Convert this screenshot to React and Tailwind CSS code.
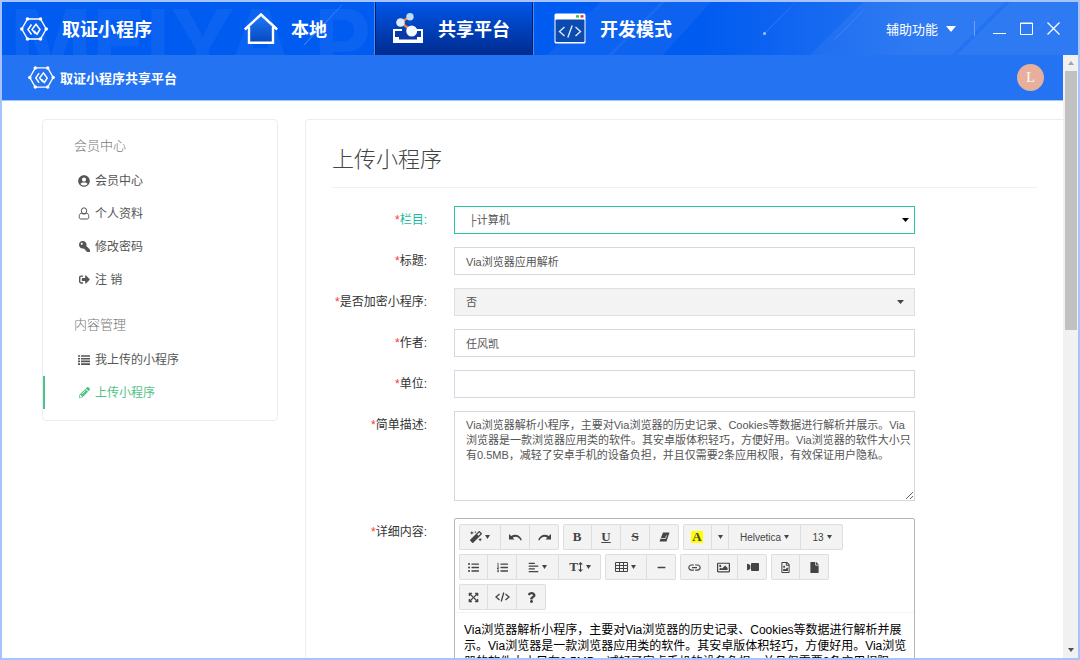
import {
  FaUserCircle, FaKey, FaSignOutAlt, FaPencilAlt, FaMagic, FaListUl, FaListOl,
  FaAlignLeft, FaMinus, FaRegImage, FaVideo, FaRegFileImage, FaFile,
  FaExpandArrowsAlt, FaQuestion,
} from 'react-icons/fa'
import { MdInsertLink } from 'react-icons/md'
import clsx from 'clsx'

const BRIEF =
  'Via浏览器解析小程序，主要对Via浏览器的历史记录、Cookies等数据进行解析并展示。Via浏览器是一款浏览器应用类的软件。其安卓版体积轻巧，方便好用。Via浏览器的软件大小只有0.5MB，减轻了安卓手机的设备负担，并且仅需要2条应用权限，有效保证用户隐私。'

const accountLinks = [
  { label: '会员中心', icon: <FaUserCircle /> },
  { label: '个人资料', icon: <PersonIcon /> },
  { label: '修改密码', icon: <FaKey className="size-[11px] -scale-x-100" /> },
  { label: '注 销', icon: <FaSignOutAlt className="size-[11px]" /> },
]

const contentLinks = [
  { label: '我上传的小程序', icon: <ListIcon /> },
  { label: '上传小程序', icon: <FaPencilAlt className="size-[11px]" />, active: true },
]

// each inner array is one button group of the editor toolbar
const toolbar = [
  [
    { name: '样式', icon: <FaMagic className="size-3" />, caret: true },
    { name: '撤销', icon: <UndoIcon /> },
    { name: '重做', icon: <UndoIcon className="-scale-x-100" /> },
  ],
  [
    { name: '粗体', icon: <Glyph>B</Glyph> },
    { name: '下划线', icon: <Glyph className="underline">U</Glyph> },
    { name: '删除线', icon: <Glyph className="line-through">S</Glyph> },
    { name: '清除格式', icon: <EraserIcon /> },
  ],
  [
    { name: '文字颜色', icon: <Glyph className="bg-[#ff0] px-px leading-3">A</Glyph> },
    { name: '更多颜色', caret: true, narrow: true },
    { name: '字体', icon: 'Helvetica', caret: true, wide: true },
    { name: '字号', icon: '13', caret: true },
  ],
  [
    { name: '无序列表', icon: <FaListUl /> },
    { name: '有序列表', icon: <FaListOl /> },
    { name: '对齐', icon: <FaAlignLeft />, caret: true },
    { name: '行高', icon: <LineHeightIcon />, caret: true },
  ],
  [
    { name: '表格', icon: <TableIcon />, caret: true },
    { name: '分割线', icon: <FaMinus className="size-[9px]" /> },
  ],
  [
    { name: '链接', icon: <MdInsertLink className="size-[15px]" /> },
    { name: '图片', icon: <FaRegImage className="size-[13px]" /> },
    { name: '视频', icon: <FaVideo className="size-3 -scale-x-100" /> },
  ],
  [
    { name: '上传图片', icon: <FaRegFileImage /> },
    { name: '上传文件', icon: <FaFile /> },
  ],
  [
    { name: '全屏', icon: <FaExpandArrowsAlt className="size-[11px]" /> },
    { name: '源代码', icon: <CodeIcon /> },
    { name: '帮助', icon: <FaQuestion className="size-[11px]" /> },
  ],
]

function Caret({ className }) {
  return (
    <svg viewBox="0 0 6 4" preserveAspectRatio="none" className={clsx('fill-current', className)} aria-hidden="true">
      <path d="M0 0h6L3 4z" />
    </svg>
  )
}

// letter buttons use a bold serif
function Glyph({ className, children }) {
  return <span className={clsx("font-['Liberation_Serif',serif] text-[13px] font-bold", className)}>{children}</span>
}

function PersonIcon() {
  return (
    <svg viewBox="0 0 12 13" className="h-[13px] w-3" fill="none" stroke="currentColor" aria-hidden="true">
      <ellipse cx="6" cy="3.8" rx="2.7" ry="3" />
      <path d="M3.2 6.2C1.7 6.6 1.2 8 1.2 9.8c0 1.6.7 2.2 1.8 2.2h6c1.1 0 1.8-.6 1.8-2.2 0-1.8-.5-3.2-2-3.6-.8 1-4.8 1-5.6 0z" />
    </svg>
  )
}

function ListIcon() {
  return (
    <svg viewBox="0 0 12 10" className="h-2.5 w-3" stroke="currentColor" strokeWidth="1.6" aria-hidden="true">
      <path d="M0 1h2M3 1h9M0 3.700h2M3 3.700h9M0 6.400h2M3 6.400h9M0 9.100h2M3 9.100h9" />
    </svg>
  )
}

function UndoIcon({ className }) {
  return (
    <svg viewBox="0 0 13 9" className={clsx('h-[9px] w-[13px]', className)} fill="currentColor" aria-hidden="true">
      <path d="M0 1v5.500h5.500L3.700 4.800C6 3 9.800 3.400 11.600 7.500l1.200-.4C11.500 1.800 6 .2 2.200 3z" />
    </svg>
  )
}

function EraserIcon() {
  return (
    <svg viewBox="0 0 11 10" className="h-2.5 w-[11px]" aria-hidden="true">
      <path d="M4 .5h6.500L7.500 9.500H.5z" fill="currentColor" />
      <path d="M2 6.500h4.500l1-3" fill="none" stroke="#f3f3f3" strokeWidth=".8" />
    </svg>
  )
}

function LineHeightIcon() {
  return (
    <span className="flex items-center">
      <Glyph>T</Glyph>
      <svg viewBox="0 0 5 10" className="h-2.5 w-[5px]" fill="currentColor" aria-hidden="true">
        <path d="M2.500 0 5 2.500H3v5h2L2.500 10 0 7.500h2v-5H0z" />
      </svg>
    </span>
  )
}

function TableIcon() {
  return (
    <svg viewBox="0 0 13 10" className="h-2.5 w-[13px]" fill="none" stroke="currentColor" aria-hidden="true">
      <path d="M.5.5h12v9H.5zM0 3.500h13M0 6.500h13M4.500 0v10M8.500 0v10" />
    </svg>
  )
}

function CodeIcon() {
  return (
    <svg viewBox="0 0 15 10" className="h-2.5 w-[15px]" fill="none" stroke="currentColor" strokeWidth="1.3" aria-hidden="true">
      <path d="M4.500 2 1 5l3.500 3M10.500 2 14 5l-3.500 3M8.800.5 6.200 9.500" />
    </svg>
  )
}

function HexLogo({ className }) {
  return (
    <svg viewBox="0 0 28 24" className={className} fill="none" stroke="#fff" strokeWidth="1.4" aria-hidden="true">
      <path d="M1.8 12 7.5 2h13l5.7 10-5.7 10h-13z" />
      <g fill="#fff" stroke="none">
        <circle cx="1.8" cy="12" r="1.8" />
        <circle cx="7.5" cy="2" r="1.8" />
        <circle cx="20.5" cy="2" r="1.8" />
        <circle cx="26.2" cy="12" r="1.8" />
        <circle cx="20.5" cy="22" r="1.8" />
        <circle cx="7.5" cy="22" r="1.8" />
      </g>
      <path d="m11.500 7.500-3.500 5 3.500 5" strokeWidth="1.5" />
      <path d="M15.500 16.800 12 12.500l4-5.300 4 5.300-3 4.700-3-3.500" strokeWidth="1.5" />
    </svg>
  )
}

function HomeIcon() {
  return (
    <svg viewBox="0 0 36 34" className="h-[34px] w-9" aria-hidden="true">
      <defs>
        <linearGradient id="home-fill" x1="0" y1="0" x2="0" y2="1">
          <stop offset="0" stopColor="#1e78f4" />
          <stop offset="1" stopColor="#0748bd" />
        </linearGradient>
      </defs>
      <path d="M6 15 18 4l12 11v15.5H6z" fill="url(#home-fill)" />
      <path d="M1.8 17.5 18 2.5l16.2 15M6 15v15.8h24V15" fill="none" stroke="#fff" strokeWidth="2.4" />
    </svg>
  )
}

function ShareIcon() {
  return (
    <svg viewBox="0 0 32 32" className="size-8" aria-hidden="true">
      <path d="M2 17h28v12H2z" fill="#0a3aa6" />
      <path d="M10 17H2v12h28V17h-6" fill="none" stroke="#fff" strokeWidth="2" />
      <path d="M2 24h5v2.500h18V24h5v6H2z" fill="#fff" />
      <path d="M18 3.500 8.500 9.500l11.200 8" fill="none" stroke="#f58220" strokeWidth="2.4" />
      <circle cx="18" cy="3.800" r="3.700" fill="#bcdcf6" />
      <circle cx="8.500" cy="9.500" r="4.300" fill="#dcecfa" />
      <circle cx="19.700" cy="18" r="5.500" fill="#f4f9ff" />
    </svg>
  )
}

function DevIcon() {
  return (
    <svg viewBox="0 0 32 31" className="h-[31px] w-8" aria-hidden="true">
      <rect x=".5" y=".5" width="31" height="30" rx="1.5" fill="#fff" />
      <rect x="1.500" y="6.500" width="29" height="22.500" rx="1" fill="#0b4bb0" />
      <rect x="22" y="2.2" width="3" height="2.4" fill="#35c24a" />
      <rect x="26.5" y="2.2" width="3" height="2.4" fill="#e53535" />
      <path d="m10.5 14-5 4.5 5 4.5M21.500 14l5 4.500-5 4.500M18.200 12.500l-4.400 12" fill="none" stroke="#dfeaff" strokeWidth="1.4" />
    </svg>
  )
}

function HeaderArt() {
  return (
    <svg viewBox="0 0 1076 53" preserveAspectRatio="none" className="absolute inset-0 h-full w-full" aria-hidden="true">
      <defs>
        <linearGradient id="streak" x1="0" y1="1" x2="1" y2="0">
          <stop offset="0" stopColor="#7ab8ff" stopOpacity=".6" />
          <stop offset="1" stopColor="#7ab8ff" stopOpacity="0" />
        </linearGradient>
      </defs>
      <g fill="#fff" fillOpacity=".05">
        <path d="M545 53 598 0h65l-53 53z" />
        <path d="M606 53 659 0h50l-48 53z" />
        <path d="M808 53 861 0h77l-53 53z" />
        <path d="M885 53 938 0h65l-53 53z" />
        <path d="M955 53 1008 0h68v53z" />
      </g>
      <path d="M302 43 340 3M763 31 794 0M833 37 862 8M1035 27l24-24" stroke="url(#streak)" />
      <circle cx="762.500" cy="31.500" r="1.500" fill="#9cc8ff" />
    </svg>
  )
}

function NavTab({ label, icon, active, className }) {
  return (
    <button
      type="button"
      aria-current={active ? 'page' : undefined}
      className={clsx(
        'flex h-full w-40 items-center text-[18px] font-bold',
        active && 'border-x border-[#4a8bf5] bg-linear-to-b from-[#0056ea] to-[#002c8f] shadow-[inset_1px_0_0_#001f66,inset_-1px_0_0_#001f66]',
        className,
      )}
    >
      {icon}
      <span className="pt-1">{label}</span>
    </button>
  )
}

function Header() {
  return (
    <header className="relative h-[53px] shrink-0 overflow-hidden bg-linear-to-r from-[#005bf0] from-65% to-[#2373f2] to-85% text-white">
      <div aria-hidden="true" className="absolute top-[-5px] left-2 font-['Inter',sans-serif] text-[88px] leading-[88px] font-bold whitespace-nowrap text-white/5">
        MEIYA PICO
      </div>
      <HeaderArt />
      <div className="relative flex h-full items-center">
        <div className="flex w-[212px] shrink-0 items-center gap-3.5 pl-[18px] text-[18px] font-bold">
          <HexLogo className="h-6 w-7" />
          <span className="pt-1">取证小程序</span>
        </div>
        <nav className="flex h-full">
          <NavTab label="本地" icon={<HomeIcon />} className="gap-3 pl-[29px]" />
          <NavTab label="共享平台" icon={<ShareIcon />} active className="gap-3.5 pl-[17px]" />
          <NavTab label="开发模式" icon={<DevIcon />} className="gap-3.5 pl-5" />
        </nav>
        <div className="ml-auto flex items-center pr-[18px]">
          <button type="button" className="flex items-center gap-2 text-[13px]">
            <span className="pt-0.5">辅助功能</span>
            <Caret className="h-1.5 w-2.5" />
          </button>
          <span className="mx-[18px] h-[15px] w-px bg-[#6ba3fa]" />
          <div className="flex items-center gap-3.5">
            <button type="button" aria-label="最小化">
              <svg viewBox="0 0 13 13" className="size-[13px]" stroke="#fff"><path d="M0 11.500h13" /></svg>
            </button>
            <button type="button" aria-label="最大化">
              <svg viewBox="0 0 13 13" className="size-[13px]" stroke="#fff" fill="none"><path d="M.5 1h12v11.500H.5zM0 1.500h13" /></svg>
            </button>
            <button type="button" aria-label="关闭">
              <svg viewBox="0 0 13 13" className="size-[13px]" stroke="#fff" strokeWidth="1.300"><path d="m.5.5 12 12m0-12-12 12" /></svg>
            </button>
          </div>
        </div>
      </div>
    </header>
  )
}

function SideSection({ title, links, className }) {
  return (
    <section className={className}>
      <h2 className="mb-0.5 flex h-8 items-center pl-[31px] text-[13px] font-light text-[#777]">{title}</h2>
      <ul>
        {links.map(link => (
          <li key={link.label}>
            <a
              href="#"
              className={clsx(
                'flex h-[33px] items-center gap-[5px] border-l-2 pl-[33px] text-[12px]',
                link.active ? 'border-[#4fc387] text-[#4fc387]' : 'border-transparent text-[#555]',
              )}
            >
              <span className="flex w-3 justify-center">{link.icon}</span>
              {link.label}
            </a>
          </li>
        ))}
      </ul>
    </section>
  )
}

function Field({ id, label, focused, children }) {
  return (
    <>
      <label
        htmlFor={id}
        className={clsx('flex h-7 items-center justify-end text-[12px] whitespace-nowrap', focused ? 'text-[#1abc9c]' : 'text-[#333]')}
      >
        <span className="text-[#f33]">*</span>
        {label}:
      </label>
      <div className="relative flex">{children}</div>
    </>
  )
}

const inputClass = 'h-7 w-full border border-[#d5d7e2] bg-white px-[11px] text-[11px] text-[#555] outline-none'

function Toolbar() {
  return (
    <div className="flex flex-wrap gap-1 border-b border-[#f3f3f3] px-1 pt-[5px] pb-0.5">
      {toolbar.map((group, i) => (
        <div key={i} className="flex h-[26px] divide-x divide-[#dedede] rounded-xs bg-[#f3f3f3] shadow-[inset_0_0_0_1px_#dedede]">
          {group.map(item => (
            <button
              key={item.name}
              type="button"
              title={item.name}
              className={clsx(
                'flex items-center justify-center gap-[3px] text-[10px] text-[#444]',
                item.narrow ? 'w-[17px]' : item.wide ? 'w-[72px]' : item.caret ? 'w-[42px]' : 'w-[29px]',
              )}
            >
              {item.icon && typeof item.icon !== 'string' ? <span className="flex text-[11px]">{item.icon}</span> : item.icon}
              {item.caret && <Caret className="h-1 w-[5px]" />}
            </button>
          ))}
        </div>
      ))}
    </div>
  )
}

function UploadForm() {
  return (
    <form className="grid grid-cols-[95px_minmax(0,461px)] gap-x-[27px] gap-y-[13px] pt-[18px]">
      <Field id="column" label="栏目" focused>
        <select id="column" className="h-7 w-full appearance-none border border-[#2cc3a0] bg-white pl-3.5 text-[11px] text-[#555] outline-none">
          <option>├计算机</option>
        </select>
        <Caret className="pointer-events-none absolute top-3 right-1.5 h-1 w-[7px] text-black" />
      </Field>
      <Field id="title" label="标题">
        <input id="title" defaultValue="Via浏览器应用解析" className={inputClass} />
      </Field>
      <Field id="encrypt" label="是否加密小程序">
        <select id="encrypt" className="h-7 w-full appearance-none border border-[#dedfe3] bg-[#f3f3f3] px-[11px] text-[11px] text-[#555] outline-none">
          <option>否</option>
          <option>是</option>
        </select>
        <Caret className="pointer-events-none absolute top-3 right-[11px] h-1 w-[7px] text-[#444]" />
      </Field>
      <Field id="author" label="作者">
        <input id="author" defaultValue="任风凯" className={inputClass} />
      </Field>
      <Field id="unit" label="单位">
        <input id="unit" className={inputClass} />
      </Field>
      <Field id="brief" label="简单描述">
        <textarea
          id="brief"
          defaultValue={BRIEF}
          className="mb-1 h-[90px] w-full resize-y border border-[#d5d7e2] bg-white py-1.5 pr-0 pl-[11px] text-[11px] leading-[15px] text-[#555] outline-none"
        />
      </Field>
      <Field id="detail" label="详细内容">
        <div className="w-full min-w-0 rounded-t-xs border border-[#b5b5b5]">
          <Toolbar />
          <div
            id="detail"
            role="textbox"
            aria-label="详细内容"
            contentEditable
            suppressContentEditableWarning
            className="h-[200px] pt-[9px] pr-[5px] pl-[9px] text-[12px] leading-4 text-black outline-none"
          >
            {BRIEF}
          </div>
        </div>
      </Field>
    </form>
  )
}

function Scrollbar() {
  return (
    <div className="flex w-[15px] shrink-0 flex-col items-center bg-[#f1f1f1]">
      <button type="button" aria-label="向上滚动" className="flex h-4 items-center">
        <Caret className="h-1 w-1.5 rotate-180 text-[#a3a3a3]" />
      </button>
      <div className="h-[43%] w-3 bg-[#c1c1c1]" />
      <button type="button" aria-label="向下滚动" className="mt-auto flex h-4 items-center">
        <Caret className="h-1 w-1.5 text-[#505050]" />
      </button>
    </div>
  )
}

export default function App() {
  return (
    <div className="flex h-screen flex-col overflow-hidden border-2 border-[#a4c3ff] bg-white font-['Liberation_Sans','Noto_Sans_CJK_SC',sans-serif]">
      <Header />
      <div className="flex min-h-0 flex-1">
        <div className="min-w-0 flex-1 overflow-hidden">
          <div className="flex h-[46px] items-center justify-between border-b border-[#a4c3ff] bg-[#2373f2] pr-[19px] pl-[26px] text-white">
            <div className="flex items-center gap-[5px] text-[13px] font-bold">
              <HexLogo className="h-[23px] w-[27px]" />
              <span className="pt-0.5">取证小程序共享平台</span>
            </div>
            <button type="button" aria-label="账户" className="size-[27px] rounded-full bg-[#e6b09d] font-['Liberation_Serif',serif] text-[14px]">
              L
            </button>
          </div>
          <div className="flex items-start gap-[27px] pt-[18px] pl-10">
            <aside className="w-[236px] shrink-0 rounded-sm border border-[#e7eef5] pt-[10px] pb-[11px]">
              <SideSection title="会员中心" links={accountLinks} />
              <SideSection title="内容管理" links={contentLinks} className="mt-[13px]" />
            </aside>
            <main className="min-w-0 flex-1 rounded-tl-sm border-t border-l border-[#e7eef5] pr-[26px] pl-[26px]">
              <h1 className="flex h-[68px] items-center border-b border-[#eef0f2] pt-3 text-[22px] font-light text-[#444]">上传小程序</h1>
              <UploadForm />
            </main>
          </div>
        </div>
        <Scrollbar />
      </div>
    </div>
  )
}
